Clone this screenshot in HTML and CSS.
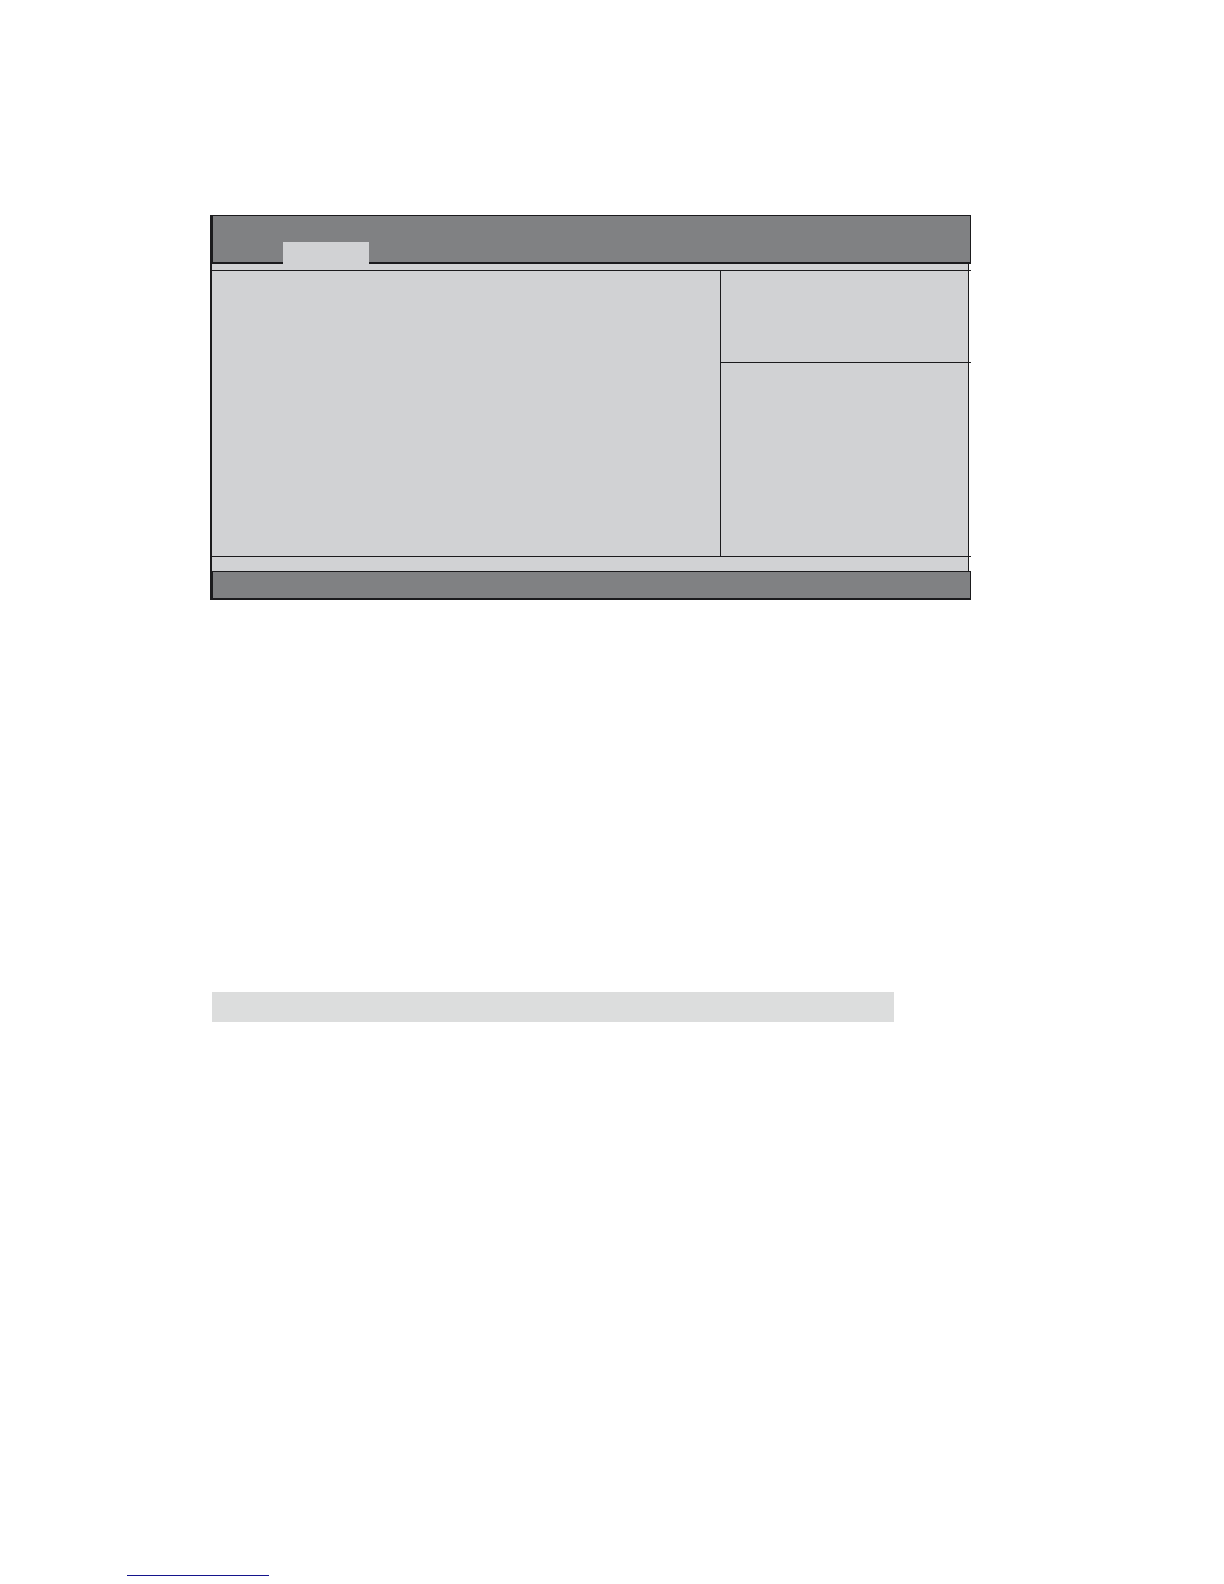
FILE: index.html
```html
<!DOCTYPE html>
<html lang="en">
<head>
<meta charset="utf-8">
<title>Setup</title>
<link rel="stylesheet" href="styles.css">
</head>
<body>
<main class="page">
  <section class="setup">
    <header class="menu">
      <button class="tab" type="button" aria-label="Selected menu"></button>
    </header>
    <div class="strip strip-top"></div>
    <hr class="rule">
    <div class="panels">
      <div class="options"></div>
      <div class="side">
        <div class="help"></div>
        <hr class="rule side-rule">
        <div class="keys"></div>
      </div>
    </div>
    <hr class="rule">
    <div class="strip strip-bottom"></div>
    <div class="status"></div>
  </section>
  <div class="band"></div>
</main>
<footer class="foot">
  <a class="foot-link" href="#" aria-label="Contents"></a>
</footer>
</body>
</html>
```
FILE: styles.css
```css
* {
  box-sizing: border-box;
}

body {
  margin: 0;
  min-height: 100vh;
  display: flex;
  flex-direction: column;
  background: #fff;
  font-family: "Liberation Sans", Arial, sans-serif;
}

.page {
  padding: 215px 253px 0 210px;
}

.setup {
  border-left: 2px solid #1b1b1d;
}

.menu {
  display: flex;
  align-items: flex-end;
  height: 49px;
  padding-left: 70px;
  background: #808183;
  border: 1px solid #1b1b1d;
  border-bottom-width: 2px;
}

.tab {
  width: 86px;
  height: 22px;
  margin: 0 0 -2px;
  padding: 0;
  border: 0;
  background: #d1d2d4;
}

.strip,
.panels {
  margin-right: 2px;
  background: #d1d2d4;
  border-right: 1px solid #1b1b1d;
}

.strip-top {
  height: 6px;
}

.strip-bottom {
  height: 14px;
}

.rule {
  height: 1px;
  margin: 0;
  border: 0;
  background: #1b1b1d;
}

.panels {
  display: grid;
  grid-template-columns: 508fr 248fr;
}

.side {
  border-left: 1px solid #1b1b1d;
}

.help {
  height: 91px;
}

.side-rule {
  margin-right: -3px;
}

.keys {
  height: 193px;
}

.status {
  height: 29px;
  background: #808183;
  border: solid #1b1b1d;
  border-width: 1px 1px 2px;
}

.band {
  height: 30px;
  margin: 392px 77px 0 2px;
  background: #dcdddd;
}

.foot {
  margin-top: auto;
  padding: 0 127px 8px;
}

.foot-link {
  display: block;
  width: 142px;
  border-bottom: 1px solid #14148c;
}
```
